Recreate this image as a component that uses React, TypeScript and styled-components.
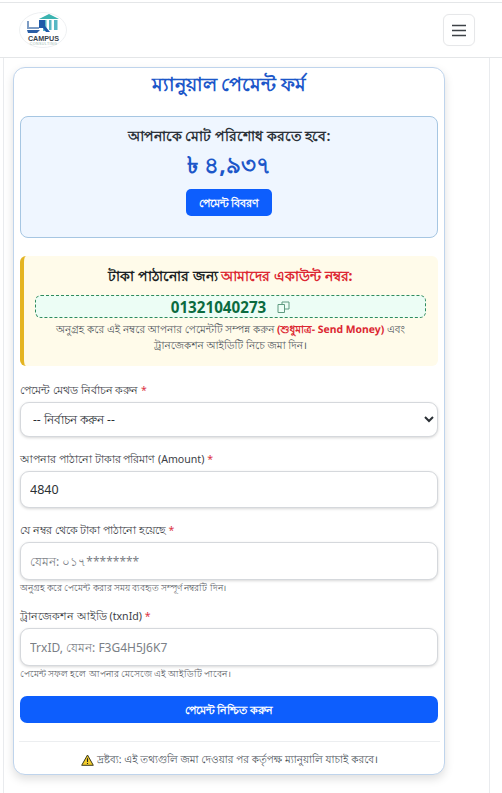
import React from "react";
import styled, { createGlobalStyle } from "styled-components";

const GlobalStyle = createGlobalStyle`
  html, body {
    margin: 0;
    padding: 0;
    background: #fff;
    font-family: "Noto Sans", "Open Sans", "Liberation Sans", sans-serif;
    color: #212529;
  }
  * { box-sizing: border-box; }
`;

const Page = styled.div`
  width: 502px;
  height: 793px;
  overflow: hidden;
  padding-top: 2px;
`;

const Navbar = styled.nav`
  height: 56px;
  border-top: 1px solid #e4e6e8;
  border-bottom: 1px solid #e4e6e8;
  padding: 0 27px 0 19px;
  display: flex;
  align-items: center;
  justify-content: space-between;
`;

const Logo = styled.svg`
  width: 48px;
  height: 36px;
  display: block;
`;

const Burger = styled.button`
  width: 32px;
  height: 32px;
  padding: 0;
  background: transparent;
  border: 1px solid #e6e7e9;
  border-radius: 6px;
  display: flex;
  align-items: center;
  justify-content: center;
  box-shadow: 0 0 1px rgba(0, 0, 0, 0.06);
`;

const Container = styled.main`
  margin: 0 12px 0 3px;
  height: 740px;
  padding: 9px 0 0 9px;
  border-left: 1px solid #e9ebee;
  border-right: 1px solid #e9ebee;
`;

const Card = styled.section`
  width: 432px;
  height: 708px;
  padding: 0 6px;
  background: #fff;
  border: 1px solid #bfd4ec;
  border-radius: 12px;
  box-shadow: 0 4px 10px rgba(0, 0, 0, 0.13);
`;

const Title = styled.h1`
  margin: 0;
  padding-top: 3px;
  height: 48px;
  font-size: 18.5px;
  line-height: 26px;
  font-weight: 700;
  color: #1c57c9;
  text-align: center;
`;

const Summary = styled.div`
  height: 122px;
  background: #eff6ff;
  border: 1px solid #a6c6e2;
  border-radius: 8px;
  display: flex;
  flex-direction: column;
  align-items: center;
  padding-top: 9px;
`;

const SummaryLabel = styled.div`
  font-size: 14.4px;
  line-height: 20px;
  font-weight: 600;
  color: #2b3138;
`;

const Amount = styled.div`
  margin-top: 3px;
  font-size: 23px;
  line-height: 31px;
  font-weight: 700;
  color: #1c57c9;
`;

const SmallButton = styled.button`
  margin-top: 9px;
  width: 86px;
  height: 27px;
  border: 0;
  border-radius: 5px;
  background: #0d5efd;
  color: #fff;
  font: 600 11px/1 "Noto Sans", sans-serif;
`;

const Notice = styled.div`
  margin-top: 18px;
  height: 110px;
  background: #fffbea;
  border-left: 4px solid #e4b422;
  border-radius: 6px;
  padding: 9px 12px 0 11px;
  text-align: center;
`;

const NoticeTitle = styled.div`
  font-size: 14px;
  line-height: 22px;
  font-weight: 700;
  color: #1b1f24;
`;

const Red = styled.span`
  color: #dc2732;
`;

const PhoneBox = styled.div`
  margin-top: 8px;
  height: 23px;
  background: #ecfdf5;
  border: 1px dashed #2e8b5e;
  border-radius: 6px;
  display: flex;
  align-items: center;
  justify-content: center;
  gap: 11px;
  font-size: 15.2px;
  font-weight: 700;
  color: #0b6b3f;
`;

const NoticeText = styled.p`
  margin: 5px 0 0;
  font-size: 10.4px;
  line-height: 15.5px;
  color: #50565c;
  text-rendering: geometricPrecision;
`;

const Field = styled.div<{ $top: number }>`
  margin-top: ${(p) => p.$top}px;
`;

const Label = styled.label`
  display: block;
  font-size: 10.6px;
  line-height: 16px;
  margin-bottom: 4px;
  color: #3b4046;
`;

const Star = styled.span`
  color: #dc3545;
`;

const controlStyles = `
  display: block;
  width: 100%;
  border: 1px solid #d5d8dc;
  border-radius: 9px;
  background: #fff;
  box-shadow: 0 1px 3px rgba(0, 0, 0, 0.16);
  font-family: "Noto Sans", sans-serif;
  color: #2b3035;
  outline: none;
`;

const SelectBox = styled.select`
  ${controlStyles}
  height: 35px;
  padding: 0 8px;
  font-size: 12px;
`;

const TextInput = styled.input<{ $height: number }>`
  ${controlStyles}
  height: ${(p) => p.$height}px;
  padding: 0 9px;
  font-size: 12.5px;

  &::placeholder {
    color: #7b8086;
    font-size: 12px;
  }
`;

const Hint = styled.div`
  margin-top: 1px;
  font-size: 8.5px;
  line-height: 14px;
  color: #5c6268;
`;

const SubmitButton = styled.button`
  display: block;
  width: 100%;
  height: 27px;
  margin-top: 15px;
  border: 0;
  border-radius: 7px;
  background: #0d5efd;
  color: #fff;
  font: 700 11.2px/1 "Noto Sans", sans-serif;
`;

const Footer = styled.div`
  margin: 18px -2px 0 -1px;
  border-top: 1px solid #eceef0;
  padding-top: 10px;
  display: flex;
  align-items: center;
  justify-content: center;
  gap: 3px;
  font-size: 10.4px;
  line-height: 16px;
  color: #495057;
  text-rendering: geometricPrecision;
`;

const CampusLogo = () => (
  <Logo viewBox="0 0 48 36">
    <ellipse cx="24" cy="18" rx="23.5" ry="17.5" fill="#fff" stroke="#eef0f2" />
    <path d="M20 7 L30 2 L40 7 Z" fill="#3bb3b0" />
    <path d="M24 8h3.5v11H24zM30 8h2.5v10H30zM35 8h3.5v10H35z" fill="#57b7c4" />
    <path d="M8 9v8h12v-2H10V9z" fill="#7d9cc4" />
    <path d="M8 18h13l-3 3H9z" fill="#2a5ea6" />
    <path d="M20 8h6v6l5 6h-4l-3-4h-4z" fill="#1f5aa8" />
    <text x="24.5" y="28.8" textAnchor="middle" fontSize="7.2" fontWeight="700" fill="#38424c" fontFamily="Liberation Sans, sans-serif">CAMPUS</text>
    <text x="24.5" y="33" textAnchor="middle" fontSize="3.6" fill="#9db8b0" fontFamily="Liberation Sans, sans-serif" letterSpacing="0.4">CONSULTING</text>
  </Logo>
);

const CopyIcon = () => (
  <svg width="13" height="12" viewBox="0 0 13 12" fill="none" stroke="#5f9a80" strokeWidth="1">
    <path d="M1 3.5h6.5v8H1z" />
    <path d="M5 3.5V1h7v7H7.5" />
  </svg>
);

const WarningIcon = () => (
  <svg width="13" height="12" viewBox="0 0 13 12">
    <path d="M6.5 1 L12.3 11.3 H0.7 Z" fill="#f2cc2c" stroke="#3c3a1a" strokeWidth="1" strokeLinejoin="round" />
    <path d="M6.5 4.2v3.8M6.5 8.9v1" stroke="#222" strokeWidth="1.1" />
  </svg>
);

export default function App() {
  return (
    <Page>
      <GlobalStyle />
      <Navbar>
        <CampusLogo />
        <Burger aria-label="menu">
          <svg width="16" height="13" viewBox="0 0 16 13" stroke="#3d4247" strokeWidth="1.4">
            <path d="M1 1.5h14M1 6.5h14M1 11.5h14" />
          </svg>
        </Burger>
      </Navbar>
      <Container>
        <Card>
          <Title>ম্যানুয়াল পেমেন্ট ফর্ম</Title>
          <Summary>
            <SummaryLabel>আপনাকে মোট পরিশোধ করতে হবে:</SummaryLabel>
            <Amount>৳ ৪,৯৩৭</Amount>
            <SmallButton>পেমেন্ট বিবরণ</SmallButton>
          </Summary>
          <Notice>
            <NoticeTitle>
              টাকা পাঠানোর জন্য <Red>আমাদের একাউন্ট নম্বর:</Red>
            </NoticeTitle>
            <PhoneBox>
              01321040273 <CopyIcon />
            </PhoneBox>
            <NoticeText>
              অনুগ্রহ করে এই নম্বরে আপনার পেমেন্টটি সম্পন্ন করুন{" "}
              <Red as="strong">(শুধুমাত্র- Send Money)</Red> এবং ট্রানজেকশন আইডিটি নিচে জমা দিন।
            </NoticeText>
          </Notice>
          <Field $top={16}>
            <Label>
              পেমেন্ট মেথড নির্বাচন করুন <Star>*</Star>
            </Label>
            <SelectBox defaultValue="">
              <option value="">-- নির্বাচন করুন --</option>
            </SelectBox>
          </Field>
          <Field $top={14}>
            <Label>
              আপনার পাঠানো টাকার পরিমাণ (Amount) <Star>*</Star>
            </Label>
            <TextInput $height={37} defaultValue="4840" />
          </Field>
          <Field $top={14}>
            <Label>
              যে নম্বর থেকে টাকা পাঠানো হয়েছে <Star>*</Star>
            </Label>
            <TextInput $height={38} placeholder="যেমন: ০১৭********" />
            <Hint>অনুগ্রহ করে পেমেন্ট করার সময় ব্যবহৃত সম্পূর্ণ নম্বরটি দিন।</Hint>
          </Field>
          <Field $top={13}>
            <Label>
              ট্রানজেকশন আইডি (txnId) <Star>*</Star>
            </Label>
            <TextInput $height={38} placeholder="TrxID, যেমন: F3G4H5J6K7" />
            <Hint>পেমেন্ট সফল হলে আপনার মেসেজে এই আইডিটি পাবেন।</Hint>
          </Field>
          <SubmitButton>পেমেন্ট নিশ্চিত করুন</SubmitButton>
          <Footer>
            <WarningIcon /> দ্রষ্টব্য: এই তথ্যগুলি জমা দেওয়ার পর কর্তৃপক্ষ ম্যানুয়ালি যাচাই করবে।
          </Footer>
        </Card>
      </Container>
    </Page>
  );
}
